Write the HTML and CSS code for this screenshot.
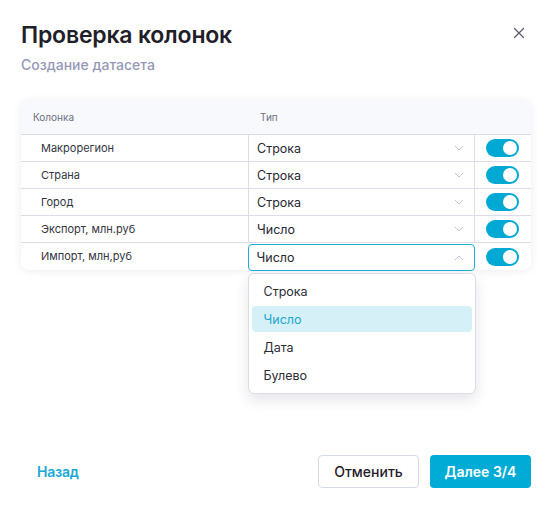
FILE: index.html
```html
<!DOCTYPE html>
<html lang="ru">
<head>
<meta charset="utf-8">
<link rel="stylesheet" href="styles.css">
</head>
<body>
<div class="modal">
  <div class="head">
    <div>
      <h1 class="title">Проверка колонок</h1>
      <div class="subtitle">Создание датасета</div>
    </div>
    <button class="close" aria-label="close">
      <svg width="12" height="12" viewBox="0 0 12 12"><path d="M1.5 1.5L10.5 10.5M10.5 1.5L1.5 10.5" stroke="#5b5d6e" stroke-width="1.3" stroke-linecap="round"/></svg>
    </button>
  </div>

  <div class="table">
    <div class="th">Колонка</div>
    <div class="th">Тип</div>
    <div class="th"></div>

    <div class="td name">Макрорегион</div>
    <div class="td sel"><span>Строка</span><svg class="chev" width="10" height="6" viewBox="0 0 10 6"><path d="M1 1L5 5L9 1" fill="none" stroke="#c3c5dc" stroke-width="1"/></svg></div>
    <div class="td tg"><span class="toggle"></span></div>

    <div class="td name">Страна</div>
    <div class="td sel"><span>Строка</span><svg class="chev" width="10" height="6" viewBox="0 0 10 6"><path d="M1 1L5 5L9 1" fill="none" stroke="#c3c5dc" stroke-width="1"/></svg></div>
    <div class="td tg"><span class="toggle"></span></div>

    <div class="td name">Город</div>
    <div class="td sel"><span>Строка</span><svg class="chev" width="10" height="6" viewBox="0 0 10 6"><path d="M1 1L5 5L9 1" fill="none" stroke="#c3c5dc" stroke-width="1"/></svg></div>
    <div class="td tg"><span class="toggle"></span></div>

    <div class="td name">Экспорт, млн.руб</div>
    <div class="td sel"><span>Число</span><svg class="chev" width="10" height="6" viewBox="0 0 10 6"><path d="M1 1L5 5L9 1" fill="none" stroke="#c3c5dc" stroke-width="1"/></svg></div>
    <div class="td tg"><span class="toggle"></span></div>

    <div class="td name last">Импорт, млн,руб</div>
    <div class="td sel last open">
      <span>Число</span><svg class="chev" width="10" height="6" viewBox="0 0 10 6"><path d="M1 5L5 1L9 5" fill="none" stroke="#c3c5dc" stroke-width="1"/></svg>
      <div class="menu">
        <div class="opt">Строка</div>
        <div class="opt active">Число</div>
        <div class="opt">Дата</div>
        <div class="opt">Булево</div>
      </div>
    </div>
    <div class="td tg last"><span class="toggle"></span></div>
  </div>

  <div class="foot">
    <a class="back" href="#">Назад</a>
    <div class="actions">
      <button class="btn cancel">Отменить</button>
      <button class="btn primary">Далее 3/4</button>
    </div>
  </div>
</div>
</body>
</html>
```

FILE: styles.css
```css
* { box-sizing: border-box; }
html, body { margin: 0; padding: 0; background: #fff; }
body {
  font-family: Inter, "Noto Sans", sans-serif;
  color: #2b2c36;
  width: 555px;
  height: 508px;
  overflow: hidden;
}
.modal {
  height: 508px;
  padding: 20px 24px 20px 21px;
  display: flex;
  flex-direction: column;
}
.head {
  display: flex;
  justify-content: space-between;
  align-items: flex-start;
}
.title {
  margin: 0;
  font-size: 23px;
  line-height: 30px;
  font-weight: 600;
  color: #1f2029;
  letter-spacing: -0.2px;
}
.subtitle {
  margin-top: 6px;
  font-size: 14px;
  line-height: 18px;
  font-weight: 500;
  color: #9698b6;
}
.close {
  border: 0;
  background: none;
  padding: 0;
  margin: 1px 0 0 0;
  width: 24px;
  height: 24px;
  display: flex;
  align-items: center;
  justify-content: center;
}
.table {
  margin-top: 26px;
  display: grid;
  grid-template-columns: 227px 227px 56px;
  border-radius: 8px;
  box-shadow: 0 1px 8px rgba(40, 44, 90, 0.08);
  background: #fff;
  position: relative;
}
.th {
  height: 35px;
  background: #f8f9fd;
  font-size: 10px;
  color: #6d6f82;
  padding: 11px 0 0 12px;
  border-bottom: 1px solid #dcdde9;
}
.th:first-child { border-top-left-radius: 8px; }
.th:nth-child(3) { border-top-right-radius: 8px; }
.td {
  height: 27px;
  border-bottom: 1px solid #dcdde9;
  display: flex;
  align-items: center;
  font-size: 11px;
}
.td.last { border-bottom: 0; }
.name {
  padding-left: 20px;
  color: #34353f;
  padding-bottom: 1px;
}
.sel {
  border-left: 1px solid #dcdde9;
  border-right: 1px solid #dcdde9;
  padding: 0 10px 0 8px;
  justify-content: space-between;
  font-size: 12.5px;
  color: #272832;
  position: relative;
}
.sel.open {
  border: 1.5px solid #1bb0d8;
  border-radius: 4px;
  margin: 1px 0 -1px 0;
  padding-left: 7.5px;
}
.chev { display: block; }
.tg {
  justify-content: flex-start;
  padding-left: 11px;
}
.toggle {
  width: 33px;
  height: 18px;
  border-radius: 9px;
  background: #00a9d4;
  position: relative;
  display: block;
}
.toggle::after {
  content: "";
  position: absolute;
  right: 2px;
  top: 2px;
  width: 14px;
  height: 14px;
  border-radius: 50%;
  background: #fff;
}
.menu {
  position: absolute;
  left: -1.5px;
  right: -1.5px;
  top: 28px;
  background: #fff;
  border: 1px solid #dcdde9;
  border-radius: 6px;
  box-shadow: 0 6px 14px rgba(40, 44, 90, 0.12);
  padding: 3px 3px 4px;
  z-index: 2;
}
.opt {
  height: 28px;
  display: flex;
  align-items: center;
  padding-left: 12px;
  font-size: 12.5px;
  color: #2b2c36;
  border-radius: 4px;
  margin-bottom: 0;
}
.opt.active {
  background: #d5f0f6;
  color: #1ca6d0;
  height: 26px;
  margin: 1px 0;
}
.foot {
  margin-top: auto;
  display: flex;
  justify-content: space-between;
  align-items: center;
}
.back {
  margin-left: 16px;
  font-size: 14px;
  font-weight: 600;
  color: #1aa9d4;
  text-decoration: none;
  letter-spacing: -0.2px;
}
.actions { display: flex; gap: 11px; }
.btn {
  height: 33px;
  width: 101px;
  border-radius: 4px;
  font-family: Inter, "Noto Sans", sans-serif;
  font-size: 14px;
  font-weight: 500;
}
.cancel {
  background: #fff;
  border: 1px solid #d8d9e6;
  color: #1f2029;
}
.primary {
  background: #00acd6;
  border: 0;
  color: #fff;
  font-weight: 600;
}
```
